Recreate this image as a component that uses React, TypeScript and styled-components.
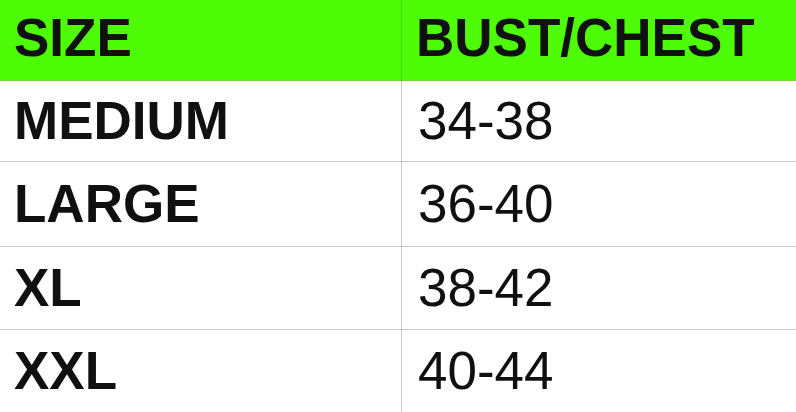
import React from "react";
import styled, { createGlobalStyle } from "styled-components";

const Global = createGlobalStyle`
  html, body { margin: 0; padding: 0; background: #ffffff; }
  #root { width: 796px; height: 412px; overflow: hidden; }
`;

const Table = styled.div`
  display: grid;
  grid-template-columns: 402px 1fr;
  grid-template-rows: 81px 81px 85px 83px 1fr;
  width: 796px;
  height: 412px;
  font-family: "Liberation Sans", Arial, sans-serif;
  color: #111010;
  background: #ffffff;
`;

const Cell = styled.div<{ $head?: boolean; $left?: boolean; $last?: boolean; $bold?: boolean }>`
  display: flex;
  align-items: center;
  box-sizing: border-box;
  padding: ${(p) => (p.$head ? "0 0 6px 14px" : p.$left ? "0 0 2px 14px" : "0 0 2px 16px")};
  background: ${(p) => (p.$head ? "#4dfc06" : "#ffffff")};
  border-bottom: ${(p) => (p.$last ? "none" : p.$head ? "1px solid #6fd24a" : "1px solid #c4c4c4")};
  border-right: ${(p) => (p.$left ? (p.$head ? "1px solid #3fd800" : "1px solid #c8c8c8") : "none")};
  font-size: 53px;
  font-weight: ${(p) => (p.$bold ? 700 : 400)};
  line-height: 1;
  white-space: nowrap;
`;

const rows: [string, string][] = [
  ["MEDIUM", "34-38"],
  ["LARGE", "36-40"],
  ["XL", "38-42"],
  ["XXL", "40-44"],
];

export default function App() {
  return (
    <>
      <Global />
      <Table>
        <Cell $head $left $bold>SIZE</Cell>
        <Cell $head $bold>BUST/CHEST</Cell>
        {rows.map(([size, bust], i) => (
          <React.Fragment key={size}>
            <Cell $left $bold $last={i === rows.length - 1}>{size}</Cell>
            <Cell $last={i === rows.length - 1}>{bust}</Cell>
          </React.Fragment>
        ))}
      </Table>
    </>
  );
}
